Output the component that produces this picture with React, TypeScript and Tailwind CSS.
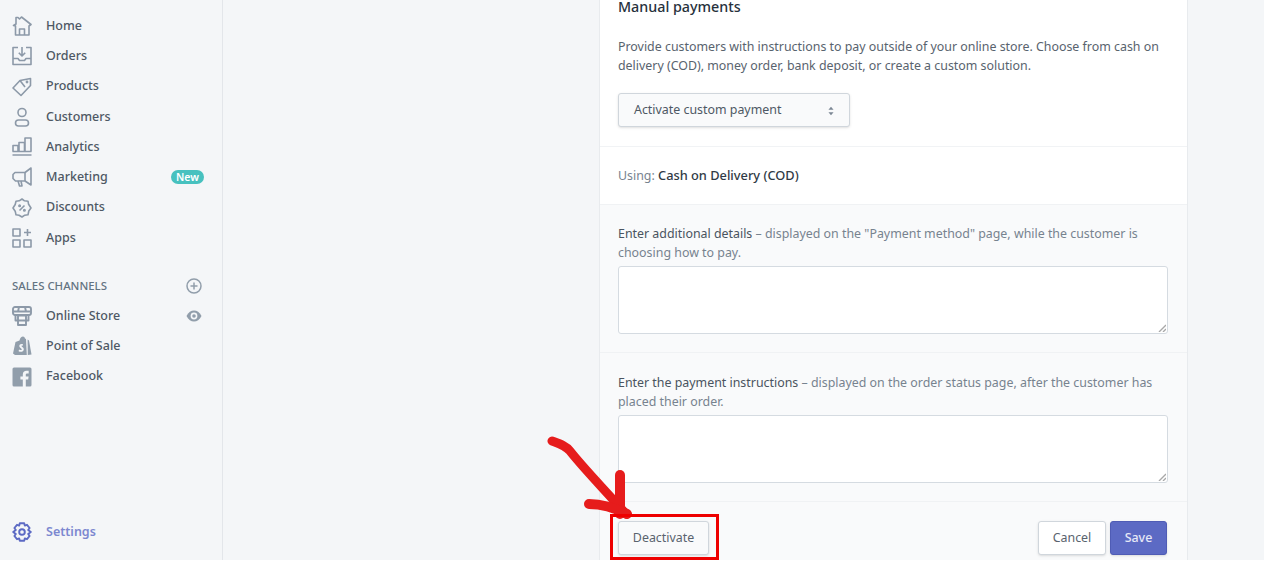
import React from 'react';

const iconProps = {
  width: 20,
  height: 20,
  viewBox: '0 0 20 20',
  fill: 'none',
  stroke: '#8c99a8',
  strokeWidth: 1.6,
  strokeLinejoin: 'round' as const,
};

const HomeIcon = () => (
  <svg {...iconProps}>
    <path d="M1.5 9.5 L4 8 V1.5 H6 L7.5 3 L9.5 1 L19 8.5 L17 10 V19 H3.5 V10 Z" />
    <path d="M7.5 19 V13 H12.5 V19" />
  </svg>
);
const OrdersIcon = () => (
  <svg {...iconProps}>
    <path d="M6 1.5 H1 V18.5 H19 V1.5 H14" />
    <path d="M1 12.5 H6 L7.5 14.5 H12.5 L14 12.5 H19" />
    <path d="M10 1 V9.5 M6.8 6.8 L10 10 L13.2 6.8" />
  </svg>
);
const ProductsIcon = () => (
  <svg {...iconProps}>
    <path d="M1 11 L8 3.5 L18.5 1.5 L18.5 8.5 L9 18.5 Z" />
    <circle cx="15" cy="5" r="0.6" />
    <path d="M8 3.5 L13 10" />
  </svg>
);
const CustomersIcon = () => (
  <svg {...iconProps}>
    <circle cx="10" cy="5.5" r="4" />
    <rect x="3.5" y="13" width="13" height="6" rx="3" />
  </svg>
);
const AnalyticsIcon = () => (
  <svg {...iconProps}>
    <path d="M1 14.5 V8.5 H6 V14.5 M7 14.5 V5.5 H12.5 V14.5 M13 14.5 V1 H19 V14.5" />
    <path d="M0.5 14.5 H19.5 M0.5 18 H19.5" />
  </svg>
);
const MarketingIcon = () => (
  <svg {...iconProps}>
    <path d="M19 1 V18 L13 14 H3.5 L1 11.5 V7.5 L3 5.5 H13 Z" />
    <path d="M13 5.5 V14 M6 14 L7.5 19 H10 L9 14" />
  </svg>
);
const DiscountsIcon = () => (
  <svg {...iconProps}>
    <path d="M10 1 L12.5 2.8 L16 3.2 L16.6 6.3 L19 10 L16.8 13 L16 16.8 L12.8 17.2 L10 19 L7 17.2 L4 16.8 L3.2 13.2 L1 10 L3.2 6.5 L4 3.2 L7.2 2.8 Z" />
    <path d="M7.5 12.5 L12.5 7.5" />
    <circle cx="7.6" cy="7.8" r="0.7" />
    <circle cx="12.4" cy="12.2" r="0.7" />
  </svg>
);
const AppsIcon = () => (
  <svg {...iconProps}>
    <rect x="1" y="1" width="7" height="7" />
    <rect x="1" y="12" width="7" height="7" />
    <rect x="12" y="12" width="7" height="7" />
    <path d="M15.5 1 V8 M12 4.5 H19" />
  </svg>
);
const StoreIcon = () => (
  <svg {...iconProps} strokeWidth={1.9}>
    <rect x="1" y="1" width="18" height="8" rx="2" />
    <path d="M7 1 L6 5.5 M13 1 L14 5.5 M1.5 5.5 H18.5" />
    <path d="M3.5 9 V14.5 H16.5 V9" />
    <path d="M6 9.5 H14 V19 H6 Z" />
  </svg>
);
const PosIcon = () => (
  <svg width="20" height="20" viewBox="0 0 20 20" fill="#919eab">
    <path d="M1 17.5 L3.5 6 L7.5 4.5 C8 2 9.5 0.5 11 0.5 C12 0.5 12.8 1.2 13 2.5 L14 3 L14.8 18.9 L3 19 Z" />
    <path d="M15.6 3.5 L17 4.5 L19.5 18.5 L15.8 19 Z" />
    <path d="M10.9 8.3 C9 7.6 7.2 8.6 7.3 10.2 C7.4 12 9.9 12.2 9.8 13.4 C9.7 14.3 8.4 14.2 7 13.4 L6.6 15.2 C8.6 16.4 11.6 15.9 11.8 13.2 C11.9 11.2 9.4 11 9.4 10.1 C9.4 9.5 10.2 9.4 10.9 9.8 Z" fill="#f4f6f8" />
  </svg>
);
const FacebookIcon = () => (
  <svg width="20" height="20" viewBox="0 0 20 20">
    <rect x="0.5" y="0.5" width="19" height="19" rx="1.5" fill="#919eab" />
    <path d="M13.8 20 V12.5 H16.2 L16.6 9.6 H13.8 V7.8 C13.8 7 14.1 6.4 15.2 6.4 H16.7 V3.8 C16.4 3.8 15.5 3.7 14.5 3.7 C12.3 3.7 10.8 5 10.8 7.4 V9.6 H8.4 V12.5 H10.8 V20 Z" fill="#f4f6f8" />
  </svg>
);
const SettingsIcon = () => (
  <svg width="20" height="20" viewBox="0 0 20 20" fill="none" stroke="#5c6ac4" strokeWidth="1.9" strokeLinejoin="round">
    <path d="M7.8 1.2 H12.2 L12.8 3.6 L15 2.8 L17.6 6 L16.2 8 L18.8 10 L16.2 12 L17.6 14 L15 17.2 L12.8 16.4 L12.2 18.8 H7.8 L7.2 16.4 L5 17.2 L2.4 14 L3.8 12 L1.2 10 L3.8 8 L2.4 6 L5 2.8 L7.2 3.6 Z" />
    <circle cx="10" cy="10" r="2.8" />
  </svg>
);
const EyeIcon = () => (
  <svg className="ml-auto" width="16" height="12" viewBox="0 0 16 12">
    <path d="M0.5 6 C2.5 2 5 0.5 8 0.5 C11 0.5 13.5 2 15.5 6 C13.5 10 11 11.5 8 11.5 C5 11.5 2.5 10 0.5 6 Z" fill="#919eab" />
    <circle cx="8" cy="6" r="3.4" fill="#f4f6f8" />
    <circle cx="8" cy="6" r="1.8" fill="#919eab" />
  </svg>
);

const navItems = [
  { label: 'Home', icon: <HomeIcon /> },
  { label: 'Orders', icon: <OrdersIcon /> },
  { label: 'Products', icon: <ProductsIcon /> },
  { label: 'Customers', icon: <CustomersIcon /> },
  { label: 'Analytics', icon: <AnalyticsIcon /> },
  { label: 'Marketing', icon: <MarketingIcon />, badge: 'New' },
  { label: 'Discounts', icon: <DiscountsIcon /> },
  { label: 'Apps', icon: <AppsIcon /> },
];

const channels = [
  { label: 'Online Store', icon: <StoreIcon />, view: true },
  { label: 'Point of Sale', icon: <PosIcon /> },
  { label: 'Facebook', icon: <FacebookIcon /> },
];

const NavRow = ({ label, icon, children }: { label: string; icon: React.ReactNode; children?: React.ReactNode }) => (
  <div className="flex h-[30.25px] items-center pl-3 pr-[20px] text-[12.5px] font-medium text-[#4e5864]">
    <span className="mr-[14px] flex w-5 shrink-0 justify-center">{icon}</span>
    <span>{label}</span>
    {children}
  </div>
);

const Sidebar = () => (
  <aside className="flex w-[223px] shrink-0 flex-col border-r border-[#e3e6ea] bg-[#f4f6f8] pt-[11px] pb-[13px]">
    <nav>
      {navItems.map((item) => (
        <NavRow key={item.label} label={item.label} icon={item.icon}>
          {item.badge && (
            <span className="-mr-[2px] ml-auto rounded-full bg-[#47c1bf] px-[5px] text-[10.5px] leading-[14px] font-semibold text-white">
              {item.badge}
            </span>
          )}
        </NavRow>
      ))}
    </nav>
    <div className="mt-[18px] flex h-[30px] items-center justify-between pl-3 pr-5 text-[11.4px] font-medium text-[#637381]">
      <span>SALES CHANNELS</span>
      <svg width="16" height="16" viewBox="0 0 16 16" fill="none" stroke="#919eab" strokeWidth="1.5">
        <circle cx="8" cy="8" r="7" />
        <path d="M8 4.5 V11.5 M4.5 8 H11.5" />
      </svg>
    </div>
    <div>
      {channels.map((item) => (
        <NavRow key={item.label} label={item.label} icon={item.icon}>
          {item.view && <EyeIcon />}
        </NavRow>
      ))}
    </div>
    <div className="mt-auto">
      <div className="flex h-[30px] items-center pl-3 text-[12.5px] font-semibold text-[#7c88d0]">
        <span className="mr-[14px] flex w-5 shrink-0 justify-center">
          <SettingsIcon />
        </span>
        <span>Settings</span>
      </div>
    </div>
  </aside>
);

const Field = ({ label, hint, top }: { label: string; hint: string; top: string }) => (
  <section className={`border-b border-[#f0f2f4] bg-[#f9fafb] pr-[19px] pb-[18px] pl-[18px] ${top}`}>
    <p className="text-[12.4px] leading-[19px] text-[#77838f]">
      <span className="text-[#4a5460]">{label}</span> {hint}
    </p>
    <div className="relative mt-[4px] h-[68px] rounded-[3px] border border-[#d5dbe1] bg-white">
      <svg className="absolute right-[1px] bottom-[1px]" width="8" height="8" viewBox="0 0 8 8" stroke="#a8a8a8" strokeWidth="1.4">
        <path d="M1 8 L8 1 M5 8 L8 5" />
      </svg>
    </div>
  </section>
);

const Annotation = () => (
  <>
    <svg className="pointer-events-none absolute top-0 left-0" width="1264" height="562" viewBox="0 0 1264 562" fill="none">
      <path
        d="M552 441 C560 444 566 446 570 451 C585 470 605 490 626 514"
        stroke="#e61c1c"
        strokeWidth="9"
        strokeLinecap="round"
        strokeLinejoin="round"
      />
      <path d="M620 475 V514" stroke="#e61c1c" strokeWidth="10" strokeLinecap="round" />
      <path d="M589 504 C602 504 615 508 627 514" stroke="#e61c1c" strokeWidth="10" strokeLinecap="round" />
    </svg>
    <div className="pointer-events-none absolute top-[514px] left-[610px] h-[46px] w-[109px] border-[3px] border-[#ee0000]" />
  </>
);

export default function App() {
  return (
    <div
      className="relative flex h-[562px] w-[1264px] flex-col overflow-hidden bg-white"
      style={{ fontFamily: '"Noto Sans", "Open Sans", sans-serif' }}
    >
      <div className="flex h-[560px] overflow-hidden bg-[#f4f6f8]">
        <Sidebar />
        <main className="flex-1 pl-[376px]">
          <div className="w-[589px] border-x border-[#e8ebee] bg-white">
            <section className="h-[147px] border-b border-[#f1f3f5] pr-[19px] pl-[18px]">
              <h2 className="text-[14.3px] leading-[14px] font-medium text-[#27313c]">Manual payments</h2>
              <p className="mt-[23px] text-[12.4px] leading-[19px] text-[#59636e]">
                Provide customers with instructions to pay outside of your online store. Choose from cash on delivery (COD), money order, bank deposit, or create a custom solution.
              </p>
              <button className="mt-[18px] flex h-[34px] w-[232px] items-center justify-between rounded-[3px] border border-[#d0d6dc] bg-[#f9fafb] pt-[1px] pr-[15px] pl-[15px] text-[12.4px] text-[#4e5864] shadow-sm">
                Activate custom payment
                <svg width="6" height="10" viewBox="0 0 7 10" fill="#7b8794">
                  <path d="M3.5 0 L6.5 3.6 H0.5 Z M3.5 10 L0.5 6.4 H6.5 Z" />
                </svg>
              </button>
            </section>
            <section className="flex h-[58px] items-center border-b border-[#f0f2f4] pt-[1px] pr-[19px] pl-[18px] text-[12.4px] text-[#77838f]">
              <span>
                Using: <span className="text-[12.8px] font-medium text-[#303a45]">Cash on Delivery (COD)</span>
              </span>
            </section>
            <Field
              top="pt-[19px]"
              label="Enter additional details"
              hint={'– displayed on the "Payment method" page, while the customer is choosing how to pay.'}
            />
            <Field
              top="pt-[20px]"
              label="Enter the payment instructions"
              hint="– displayed on the order status page, after the customer has placed their order."
            />
            <section className="flex h-[64px] items-start justify-between bg-[#f9fafb] pr-[20px] pl-[18px] pt-[19px]">
              <button className="h-[34px] w-[91px] rounded-[3px] border border-[#d0d6dc] bg-[#f9fafb] pt-[1px] text-[12.4px] text-[#59636e] shadow-sm">
                Deactivate
              </button>
              <div className="flex gap-[4px]">
                <button className="h-[34px] w-[68px] rounded-[3px] border border-[#d0d6dc] bg-white pt-[1px] text-[12.4px] text-[#59636e] shadow-sm">
                  Cancel
                </button>
                <button className="h-[34px] w-[57px] rounded-[3px] border border-[#4f5cb5] bg-[#5c6ac4] pt-[1px] text-[12.4px] font-medium text-white/85 shadow-sm">
                  Save
                </button>
              </div>
            </section>
          </div>
        </main>
      </div>
      <div className="h-[2px] bg-white" />
      <Annotation />
    </div>
  );
}
